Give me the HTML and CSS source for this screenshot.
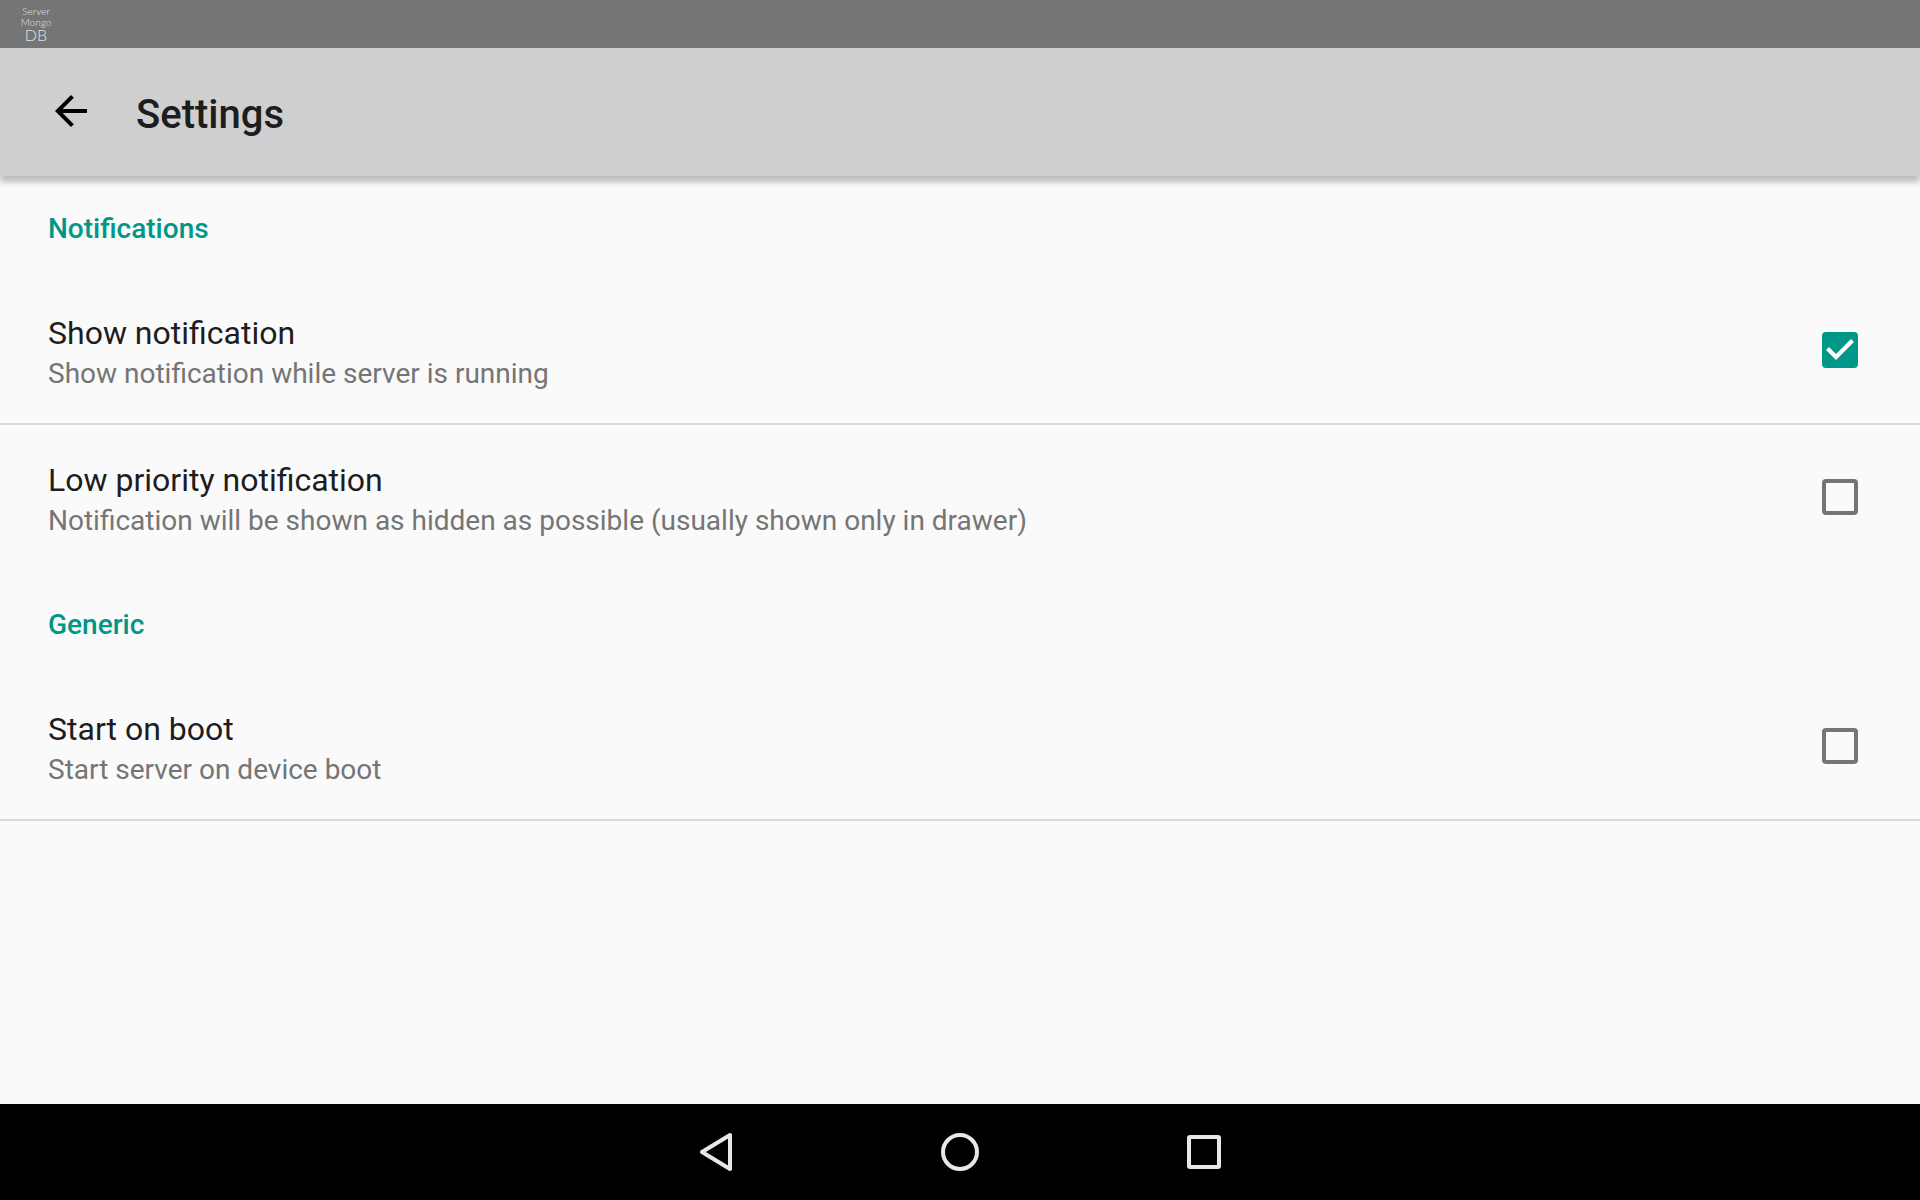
FILE: index.html
```
<!DOCTYPE html>
<html lang="en">
<head>
    <meta charset="UTF-8">
    <meta name="viewport" content="width=device-width, initial-scale=1.0">
    <title>Settings</title>
    <link rel="stylesheet" href="styles.css">
</head>
<body>
    <div class="status-bar">
        <div class="app-badge">
            <span>Server</span>
            <span>Mongo</span>
            <span class="app-badge-large">DB</span>
        </div>
    </div>

    <header class="toolbar">
        <button type="button" class="back-button" aria-label="Navigate up">
            <svg width="48" height="48" viewBox="0 0 24 24">
                <path d="M20 11H7.83l5.59-5.59L12 4l-8 8 8 8 1.41-1.41L7.83 13H20v-2z"/>
            </svg>
        </button>
        <h1>Settings</h1>
    </header>

    <main class="settings">
        <section class="group">
            <h2>Notifications</h2>
            <label class="preference">
                <span class="preference-text">
                    <span class="preference-title">Show notification</span>
                    <span class="preference-summary">Show notification while server is running</span>
                </span>
                <input type="checkbox" checked>
            </label>
            <label class="preference no-divider">
                <span class="preference-text">
                    <span class="preference-title">Low priority notification</span>
                    <span class="preference-summary">Notification will be shown as hidden as possible (usually shown only in drawer)</span>
                </span>
                <input type="checkbox">
            </label>
        </section>

        <section class="group">
            <h2>Generic</h2>
            <label class="preference">
                <span class="preference-text">
                    <span class="preference-title">Start on boot</span>
                    <span class="preference-summary">Start server on device boot</span>
                </span>
                <input type="checkbox">
            </label>
        </section>
    </main>

    <nav class="nav-bar">
        <button type="button" aria-label="Back">
            <svg width="40" height="40" viewBox="0 0 40 40">
                <path d="M34 3v34L6 20z"/>
            </svg>
        </button>
        <button type="button" aria-label="Home">
            <svg width="40" height="40" viewBox="0 0 40 40">
                <circle cx="20" cy="20" r="17"/>
            </svg>
        </button>
        <button type="button" aria-label="Recent apps">
            <svg width="40" height="40" viewBox="0 0 40 40">
                <rect x="5" y="5" width="30" height="30" rx="1"/>
            </svg>
        </button>
    </nav>
</body>
</html>
```
FILE: styles.css
```
* {
    margin: 0;
    padding: 0;
    box-sizing: border-box;
}

body {
    font-family: Roboto, sans-serif;
    background: #fafafa;
    color: #1d1d1d;
    min-height: 100vh;
    display: flex;
    flex-direction: column;
}

button {
    background: none;
    border: none;
    cursor: pointer;
}

/* Status bar */
.status-bar {
    background: #757575;
    height: 48px;
    padding: 6px 16px 0;
    display: flex;
}

.app-badge {
    width: 40px;
    display: flex;
    flex-direction: column;
    align-items: center;
    font-family: Lato, sans-serif;
    font-weight: 300;
    font-size: 10px;
    line-height: 11px;
    color: #e0e0e0;
}

.app-badge-large {
    font-size: 16px;
    line-height: 14px;
}

/* Toolbar */
.toolbar {
    background: #cfcfcf;
    height: 128px;
    padding: 0 47px;
    display: flex;
    align-items: center;
    gap: 41px;
    box-shadow: 0 6px 6px rgba(0, 0, 0, 0.25);
}

.back-button {
    padding-bottom: 2px;
}

.back-button svg {
    display: block;
    fill: #000;
}

h1 {
    font-size: 40px;
    font-weight: 500;
    line-height: 48px;
    padding-top: 6px;
}

/* Preference list */
.settings {
    flex: 1;
}

h2 {
    color: #009688;
    font-size: 28px;
    font-weight: 500;
    line-height: 36px;
    padding: 35px 48px 31px;
}

.preference {
    display: flex;
    align-items: center;
    justify-content: space-between;
    padding: 31px 62px 32px 48px;
    border-bottom: 2px solid #dadada;
    cursor: pointer;
}

.preference.no-divider {
    border-bottom-color: transparent;
}

.preference-text {
    display: flex;
    flex-direction: column;
}

.preference-title {
    font-size: 32px;
    line-height: 48px;
}

.preference-summary {
    font-size: 28px;
    line-height: 34px;
    color: #757575;
}

input[type="checkbox"] {
    appearance: none;
    flex: none;
    width: 36px;
    height: 36px;
    border: 4px solid #757575;
    border-radius: 4px;
    display: flex;
    align-items: center;
    justify-content: center;
    cursor: pointer;
}

input[type="checkbox"]:checked {
    background: #009688;
    border-color: #009688;
}

input[type="checkbox"]:checked::before {
    content: "";
    flex: none;
    width: 28px;
    height: 22px;
    background: #fff;
    clip-path: polygon(0 11px, 3px 8px, 10px 15px, 25px 0, 28px 3px, 10px 21px);
}

/* Navigation bar */
.nav-bar {
    background: #000;
    height: 96px;
    display: flex;
    justify-content: center;
}

.nav-bar button {
    width: 244px;
    display: flex;
    align-items: center;
    justify-content: center;
}

.nav-bar svg {
    fill: none;
    stroke: #e8e8e8;
    stroke-width: 4;
    stroke-linejoin: round;
}
```
